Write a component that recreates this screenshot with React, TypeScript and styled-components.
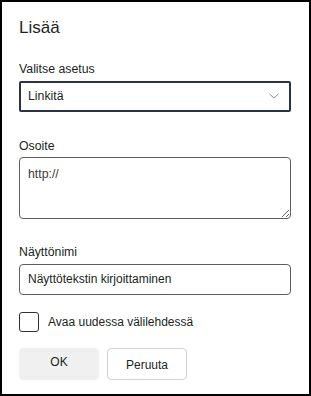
import { createGlobalStyle } from 'styled-components';
import styled from 'styled-components';

const GlobalStyle = createGlobalStyle`
  html, body {
    margin: 0;
    padding: 0;
    background: #fff;
  }
  * {
    box-sizing: border-box;
  }
`;

const FONT = `'Liberation Sans', Arial, sans-serif`;

const Panel = styled.div`
  width: 311px;
  height: 396px;
  border: 2px solid #000;
  background: #fff;
  padding: 14px 18px 0 17px;
  font-family: ${FONT};
  color: #201f1e;
  display: flex;
  flex-direction: column;
`;

const Title = styled.h2`
  margin: 0;
  font-size: 17px;
  line-height: 24px;
  font-weight: 400;
`;

const Field = styled.div<{ $top: number }>`
  display: flex;
  flex-direction: column;
  gap: 2.5px;
  margin-top: ${({ $top }) => $top}px;
`;

const Label = styled.label`
  font-size: 12.3px;
  line-height: 18px;
  color: #201f1e;
`;

const SelectBox = styled.div`
  height: 31px;
  border: 2px solid #2b3249;
  border-radius: 2px;
  display: flex;
  align-items: center;
  justify-content: space-between;
  padding: 0 10px 0 7px;
  font-size: 12.3px;
  cursor: pointer;
`;

const Chevron = () => (
  <svg width="10" height="6" viewBox="0 0 10 6" fill="none">
    <path d="M0.5 0.8 L5 5.2 L9.5 0.8" stroke="#8a8886" strokeWidth="1" />
  </svg>
);

const TextArea = styled.textarea`
  height: 62px;
  border: 1px solid #605e5c;
  border-radius: 4px;
  padding: 8px 8px;
  font-family: ${FONT};
  font-size: 12.3px;
  line-height: 16px;
  color: #3b3a39;
  resize: vertical;
  outline: none;
`;

const TextInput = styled.input`
  height: 31px;
  border: 1px solid #605e5c;
  border-radius: 4px;
  padding: 0 8px;
  font-family: ${FONT};
  font-size: 12px;
  color: #201f1e;
  outline: none;
`;

const CheckRow = styled.label`
  display: flex;
  align-items: center;
  gap: 9px;
  margin-top: 17px;
  font-size: 12px;
  cursor: pointer;
`;

const CheckBox = styled.span`
  width: 20px;
  height: 20px;
  border: 1px solid #323130;
  border-radius: 3px;
  flex: none;
`;

const Buttons = styled.div`
  display: flex;
  gap: 8px;
  margin-top: 16px;
`;

const Button = styled.button<{ $primary?: boolean }>`
  width: 80px;
  height: 32px;
  border-radius: 4px;
  font-family: ${FONT};
  font-size: 12px;
  color: #201f1e;
  cursor: pointer;
  border: 1px solid ${({ $primary }) => ($primary ? '#f0f0f0' : '#d1d1d1')};
  background: ${({ $primary }) => ($primary ? '#f0f0f0' : '#fff')};
  padding: ${({ $primary }) => ($primary ? '0 0 4px' : '2px 0 0')};
`;

export default function App() {
  return (
    <>
      <GlobalStyle />
      <Panel>
        <Title>Lisää</Title>

        <Field $top={20}>
          <Label>Valitse asetus</Label>
          <SelectBox>
            <span>Linkitä</span>
            <Chevron />
          </SelectBox>
        </Field>

        <Field $top={25}>
          <Label>Osoite</Label>
          <TextArea defaultValue="http://" />
        </Field>

        <Field $top={24}>
          <Label>Näyttönimi</Label>
          <TextInput defaultValue="Näyttötekstin kirjoittaminen" />
        </Field>

        <CheckRow>
          <CheckBox />
          Avaa uudessa välilehdessä
        </CheckRow>

        <Buttons>
          <Button $primary type="button">OK</Button>
          <Button type="button">Peruuta</Button>
        </Buttons>
      </Panel>
    </>
  );
}
